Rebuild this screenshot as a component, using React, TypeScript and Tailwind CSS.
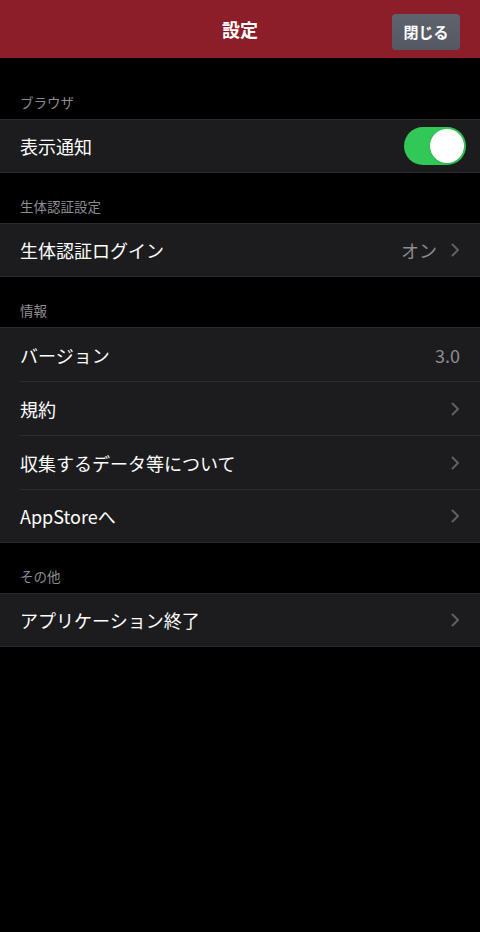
import React, { useState } from "react";

const font = "font-['Noto_Sans_CJK_JP','Noto_Sans',sans-serif]";

const Chevron = () => (
  <svg width="9" height="16" viewBox="0 0 9 16" className="ml-[14px] shrink-0">
    <path d="M1.5 2.5l5.5 5.5-5.5 5.5" fill="none" stroke="#5f5f64" strokeWidth="2" strokeLinecap="round" strokeLinejoin="round" />
  </svg>
);

const SectionHeader = ({ label, first }: { label: string; first?: boolean }) => (
  <div className={first ? "h-[61px] flex items-end pb-[10px] px-5" : "h-[50px] flex items-end pb-[10px] px-5"}>
    <span className="text-[13.5px] text-[#8d8d92] leading-none">{label}</span>
  </div>
);

const Row = ({
  label,
  value,
  chevron,
  last,
  children,
}: {
  label: string;
  value?: string;
  chevron?: boolean;
  last?: boolean;
  children?: React.ReactNode;
}) => (
  <div className="pl-5">
    <div
      className={
        last
          ? "h-[52px] flex items-center pr-5"
          : "h-[54px] flex items-center pr-5 border-b border-[#2c2c2e]"
      }
    >
      <span className="flex-1 text-[18px] text-white leading-none">{label}</span>
      {value && <span className="text-[18px] text-[#8d8d92] leading-none">{value}</span>}
      {chevron && <Chevron />}
      {children}
    </div>
  </div>
);

const Group = ({ children }: { children: React.ReactNode }) => (
  <div className="bg-[#1c1c1e] border-y border-[#2a2a2c]">{children}</div>
);

export default function App() {
  const [on, setOn] = useState(true);

  return (
    <div className={`${font} w-[480px] min-h-[932px] bg-black`}>
      {/* Header */}
      <div className="relative h-[58px] bg-[#8b1e28] flex items-center justify-center">
        <span className="text-white font-bold text-[18px]">設定</span>
        <button className="absolute right-5 top-[14px] h-9 w-[68px] rounded bg-gradient-to-b from-[#5f636d] to-[#545862] text-white font-bold text-[15px]">
          閉じる
        </button>
      </div>

      <SectionHeader label="ブラウザ" first />
      <Group>
        <div className="pl-5 pr-[14px] h-[52px] flex items-center">
          <span className="flex-1 text-[18px] text-white leading-none">表示通知</span>
          <button
            onClick={() => setOn(!on)}
            className={
              on
                ? "w-[62px] h-[38px] rounded-full bg-[#31c857] flex items-center justify-end px-[2px]"
                : "w-[62px] h-[38px] rounded-full bg-[#39393d] flex items-center justify-start px-[2px]"
            }
          >
            <span className="w-[34px] h-[34px] rounded-full bg-white shadow" />
          </button>
        </div>
      </Group>

      <SectionHeader label="生体認証設定" />
      <Group>
        <Row label="生体認証ログイン" value="オン" chevron last />
      </Group>

      <SectionHeader label="情報" />
      <Group>
        <Row label="バージョン" value="3.0" />
        <Row label="規約" chevron />
        <Row label="収集するデータ等について" chevron />
        <Row label="AppStoreへ" chevron last />
      </Group>

      <SectionHeader label="その他" />
      <Group>
        <Row label="アプリケーション終了" chevron last />
      </Group>
    </div>
  );
}
